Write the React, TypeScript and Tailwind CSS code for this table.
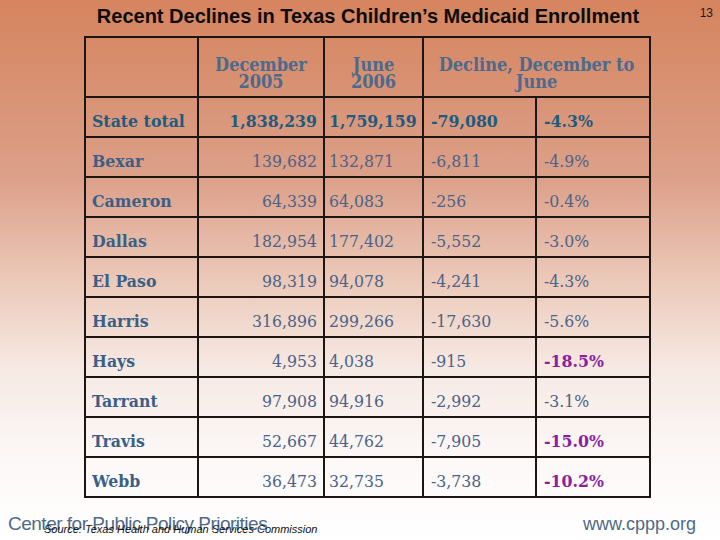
const rows = [
  { name: "Bexar", dec: "139,682", jun: "132,871", diff: "-6,811", pct: "-4.9%", hot: false },
  { name: "Cameron", dec: "64,339", jun: "64,083", diff: "-256", pct: "-0.4%", hot: false },
  { name: "Dallas", dec: "182,954", jun: "177,402", diff: "-5,552", pct: "-3.0%", hot: false },
  { name: "El Paso", dec: "98,319", jun: "94,078", diff: "-4,241", pct: "-4.3%", hot: false },
  { name: "Harris", dec: "316,896", jun: "299,266", diff: "-17,630", pct: "-5.6%", hot: false },
  { name: "Hays", dec: "4,953", jun: "4,038", diff: "-915", pct: "-18.5%", hot: true },
  { name: "Tarrant", dec: "97,908", jun: "94,916", diff: "-2,992", pct: "-3.1%", hot: false },
  { name: "Travis", dec: "52,667", jun: "44,762", diff: "-7,905", pct: "-15.0%", hot: true },
  { name: "Webb", dec: "36,473", jun: "32,735", diff: "-3,738", pct: "-10.2%", hot: true },
];

const serif = "font-['DejaVu_Serif_Condensed','DejaVu_Serif',Georgia,serif]";
const cell = "border-2 border-[#1c1512] align-bottom h-[40px] pb-[5px] leading-[20px]";

export default function App() {
  return (
    <div className="relative flex h-[540px] w-[720px] flex-col overflow-hidden bg-[linear-gradient(to_bottom,#d5845e_0%,#dca089_33%,#ecc9b9_52%,#f6e9e3_68%,#fcf8f7_85%,#ffffff_100%)]">
      {/* Title */}
      <div className="flex h-[36px] items-start justify-center pl-[16px] pt-[4px]">
        <h1 className="font-['Liberation_Sans',Arial,sans-serif] text-[20px] font-bold leading-[24px] text-[#0d0b0a]">
          Recent Declines in Texas Children’s Medicaid Enrollment
        </h1>
      </div>
      <span className="absolute right-[7px] top-[4px] font-['Liberation_Sans',Arial,sans-serif] text-[12px] text-[#1f1a18]">
        13
      </span>

      {/* Table */}
      <table className={`ml-[84px] w-[565px] table-fixed border-collapse ${serif} text-[17.5px]`}>
        <colgroup>
          <col className="w-[113px]" />
          <col className="w-[126px]" />
          <col className="w-[99px]" />
          <col className="w-[113px]" />
          <col className="w-[114px]" />
        </colgroup>
        <thead>
          <tr className="h-[60px] text-[18px] font-bold leading-[17px] text-[#4a6a8e]">
            <th className="border-2 border-[#1c1512]" />
            <th className="border-2 border-[#1c1512] pb-[6px] align-bottom font-bold">
              December
              <br />
              2005
            </th>
            <th className="border-2 border-[#1c1512] pb-[6px] align-bottom font-bold">
              June
              <br />
              2006
            </th>
            <th colSpan={2} className="border-2 border-[#1c1512] pb-[6px] align-bottom font-bold">
              Decline, December to
              <br />
              June
            </th>
          </tr>
        </thead>
        <tbody>
          <tr className="font-bold text-[#1d5b80]">
            <td className={`${cell} pl-[6px]`}>State total</td>
            <td className={`${cell} pr-[6px] text-right`}>1,838,239</td>
            <td className={`${cell} pl-[4px]`}>1,759,159</td>
            <td className={`${cell} pl-[7px]`}>-79,080</td>
            <td className={`${cell} pl-[7px]`}>-4.3%</td>
          </tr>
          {rows.map((r) => (
            <tr key={r.name} className="text-[#4b6389]">
              <td className={`${cell} pl-[6px] font-bold text-[#3a5f87]`}>{r.name}</td>
              <td className={`${cell} pr-[6px] text-right`}>{r.dec}</td>
              <td className={`${cell} pl-[4px]`}>{r.jun}</td>
              <td className={`${cell} pl-[7px]`}>{r.diff}</td>
              <td className={`${cell} pl-[7px] ${r.hot ? "font-bold text-[#8b1f9f]" : ""}`}>{r.pct}</td>
            </tr>
          ))}
        </tbody>
      </table>

      {/* Footer */}
      <div className="mt-auto flex items-end justify-between pb-[3px] pl-[8px] pr-[24px] font-['Liberation_Sans',Arial,sans-serif]">
        <div className="relative">
          <span className="text-[19px] leading-[26px] tracking-[-0.5px] text-[#4f6a86]">
            Center for Public Policy Priorities
          </span>
          <span className="absolute left-[36px] top-[11px] whitespace-nowrap text-[11px] italic leading-[14px] text-[#111]">
            Source: Texas Health and Human Services Commission
          </span>
        </div>
        <span className="text-[18px] leading-[26px] text-[#4f6a86]">www.cppp.org</span>
      </div>
    </div>
  );
}
